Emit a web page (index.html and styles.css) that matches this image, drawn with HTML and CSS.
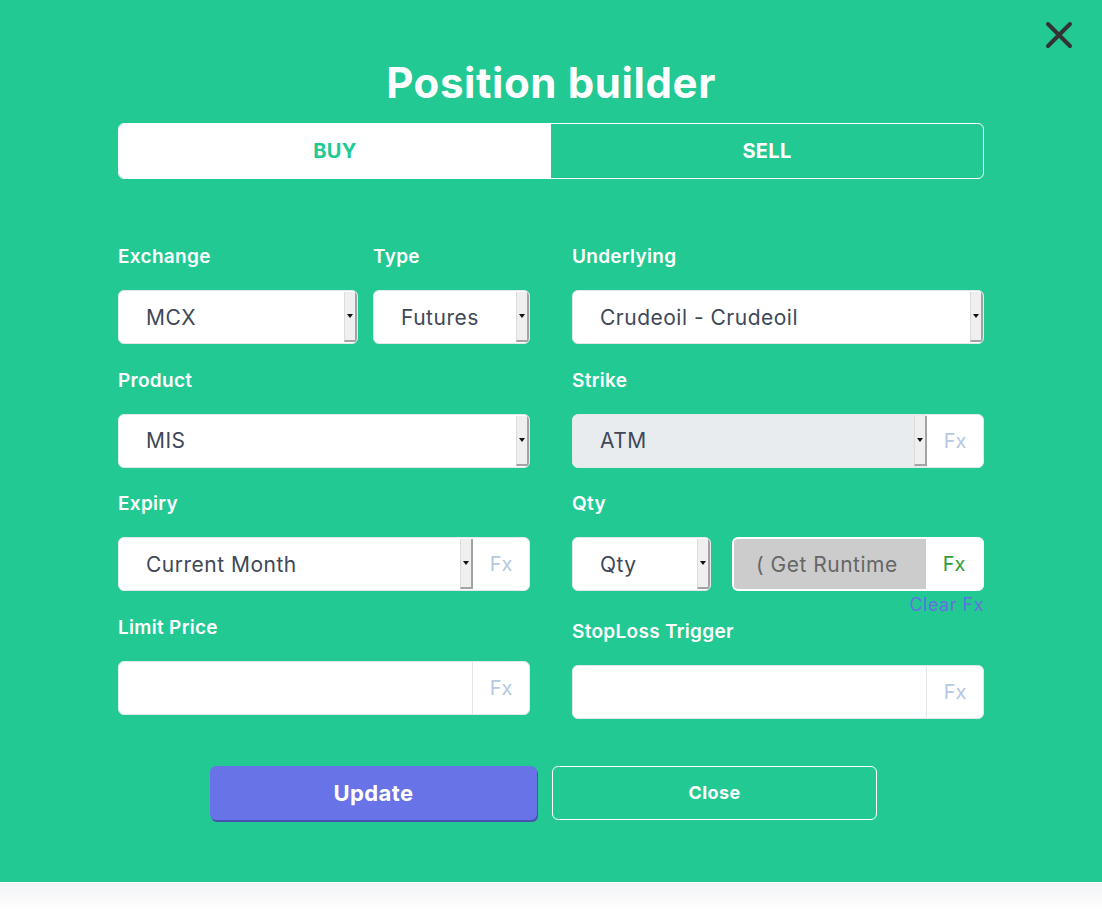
FILE: index.html
```html
<!DOCTYPE html>
<html lang="en">
<head>
    <meta charset="UTF-8">
    <meta name="viewport" content="width=device-width, initial-scale=1.0">
    <title>Position builder</title>
    <link rel="stylesheet" href="styles.css">
</head>
<body>
    <div class="modal">
        <button class="close-x" aria-label="Close">
            <svg width="30" height="30" viewBox="0 0 30 30">
                <path d="M4 4 L26 26 M26 4 L4 26" stroke="#333" stroke-width="4" stroke-linecap="round" fill="none"/>
            </svg>
        </button>
        <div class="builder">
            <h1>Position builder</h1>
            <div class="toggle">
                <button class="toggle-btn active">BUY</button>
                <button class="toggle-btn">SELL</button>
            </div>

            <div class="form">
                <div class="column">
                    <div class="pair">
                        <div class="field">
                            <label>Exchange</label>
                            <div class="select-box">
                                <select><option>MCX</option></select>
                                <span class="arrow"></span>
                            </div>
                        </div>
                        <div class="field">
                            <label>Type</label>
                            <div class="select-box">
                                <select><option>Futures</option></select>
                                <span class="arrow"></span>
                            </div>
                        </div>
                    </div>
                    <div class="field">
                        <label>Product</label>
                        <div class="select-box">
                            <select><option>MIS</option></select>
                            <span class="arrow"></span>
                        </div>
                    </div>
                    <div class="field">
                        <label>Expiry</label>
                        <div class="select-box">
                            <select><option>Current Month</option></select>
                            <span class="arrow"></span>
                            <span class="fx">Fx</span>
                        </div>
                    </div>
                    <div class="field">
                        <label>Limit Price</label>
                        <div class="select-box">
                            <input type="text">
                            <span class="fx bordered">Fx</span>
                        </div>
                    </div>
                </div>

                <div class="column">
                    <div class="field">
                        <label>Underlying</label>
                        <div class="select-box">
                            <select><option>Crudeoil - Crudeoil</option></select>
                            <span class="arrow"></span>
                        </div>
                    </div>
                    <div class="field">
                        <label>Strike</label>
                        <div class="select-box">
                            <div class="disabled-part">
                                <select disabled><option>ATM</option></select>
                                <span class="arrow"></span>
                            </div>
                            <span class="fx">Fx</span>
                        </div>
                    </div>
                    <div class="field">
                        <label>Qty</label>
                        <div class="qty-row">
                            <div class="select-box">
                                <select><option>Qty</option></select>
                                <span class="arrow"></span>
                            </div>
                            <div class="select-box runtime">
                                <input type="text" value="( Get Runtime" readonly>
                                <span class="fx active">Fx</span>
                            </div>
                        </div>
                        <a class="clear-fx" href="#">Clear Fx</a>
                    </div>
                    <div class="field">
                        <label>StopLoss Trigger</label>
                        <div class="select-box">
                            <input type="text">
                            <span class="fx bordered">Fx</span>
                        </div>
                    </div>
                </div>
            </div>

            <div class="actions">
                <button class="btn-update">Update</button>
                <button class="btn-close">Close</button>
            </div>
        </div>
    </div>
</body>
</html>
```

FILE: styles.css
```css
body {
    margin: 0;
    font-family: 'Inter', 'Noto Sans', sans-serif;
    background: linear-gradient(#f2f3f6 883px, #ffffff 910px);
    min-height: 910px;
}
.modal {
    position: relative;
    height: 883px;
    background: #22c993;
    border-bottom: 1px solid #ffffff;
    box-sizing: border-box;
}
.close-x {
    position: absolute;
    top: 20px;
    right: 28px;
    padding: 0;
    border: none;
    background: none;
    cursor: pointer;
}
.builder {
    width: 866px;
    margin: 0 auto;
    padding-top: 58px;
}
h1 {
    margin: 0;
    text-align: center;
    color: #fff;
    font-size: 42px;
    line-height: 50px;
    font-weight: 700;
    letter-spacing: 0.6px;
}
.toggle {
    display: flex;
    margin-top: 15px;
    height: 56px;
    border: 1px solid #fff;
    border-radius: 6px;
    overflow: hidden;
    box-sizing: border-box;
}
.toggle-btn {
    flex: 1;
    border: none;
    background: transparent;
    color: #fff;
    font-family: inherit;
    font-size: 20px;
    font-weight: 700;
    letter-spacing: 0.3px;
    cursor: pointer;
}
.toggle-btn.active {
    background: #fff;
    color: #22c993;
}
.form {
    display: grid;
    grid-template-columns: 412px 412px;
    column-gap: 42px;
    align-items: start;
    margin-top: 65px;
}
.column {
    min-width: 0;
    display: flex;
    flex-direction: column;
    gap: 23.66px;
}
.pair {
    display: grid;
    grid-template-columns: 240px 1fr;
    column-gap: 15px;
}
.field {
    min-width: 0;
}
.field label {
    display: block;
    color: #fff;
    font-size: 19px;
    font-weight: 600;
    line-height: 26px;
    letter-spacing: 0.3px;
    margin-bottom: 20px;
}
.select-box {
    display: flex;
    height: 54px;
    background: #fff;
    border: 1px solid #e4e8ec;
    border-radius: 6px;
    overflow: hidden;
    box-sizing: border-box;
}
.select-box select,
.select-box input {
    flex: 1;
    width: 0;
    min-width: 0;
    appearance: none;
    border: none;
    outline: none;
    background: transparent;
    padding: 0 0 0 27px;
    font-family: inherit;
    font-size: 21px;
    letter-spacing: 0.5px;
    color: #404858;
}
.arrow {
    flex: none;
    width: 10px;
    margin: 1px 0;
    background: #efefef;
    border-left: 1px solid #dcdcdc;
    border-right: 2px solid #a3a3a3;
    border-bottom: 2px solid #a3a3a3;
    display: flex;
    align-items: center;
    justify-content: center;
}
.arrow::after {
    content: "";
    border-left: 3px solid transparent;
    border-right: 3px solid transparent;
    border-top: 4px solid #111;
}
.fx {
    flex: none;
    width: 56px;
    display: flex;
    align-items: center;
    justify-content: center;
    font-size: 20px;
    color: #b6c8e2;
}
.fx.bordered {
    border-left: 1px solid #e4e8ec;
}
.fx.active {
    color: #2e9e3e;
}
.disabled-part {
    flex: 1;
    min-width: 0;
    display: flex;
    background: #e9ecef;
}
.disabled-part select {
    color: #404858;
    opacity: 1;
}
.qty-row {
    display: grid;
    grid-template-columns: 139px 1fr;
    column-gap: 21px;
}
.runtime {
    border: 2px solid #fff;
}
.runtime input {
    background: #cccccc;
    padding-left: 22px;
    color: #666;
}
.clear-fx {
    display: block;
    text-align: right;
    line-height: 28px;
    margin-bottom: -24px;
    font-size: 18px;
    letter-spacing: 0.5px;
    color: #6570e0;
    text-decoration: none;
}
.actions {
    display: flex;
    gap: 15px;
    margin-top: 47px;
    padding-left: 92px;
}
.actions button {
    height: 54px;
    border-radius: 6px;
    font-family: inherit;
    font-weight: 700;
    color: #fff;
    letter-spacing: 0.4px;
    cursor: pointer;
}
.btn-update {
    width: 327px;
    background: #6773e6;
    border: none;
    font-size: 22px;
    box-shadow: 1px 2px 0 #4a50b2;
}
.btn-close {
    width: 325px;
    background: transparent;
    border: 1px solid #fff;
    font-size: 18px;
}
```
